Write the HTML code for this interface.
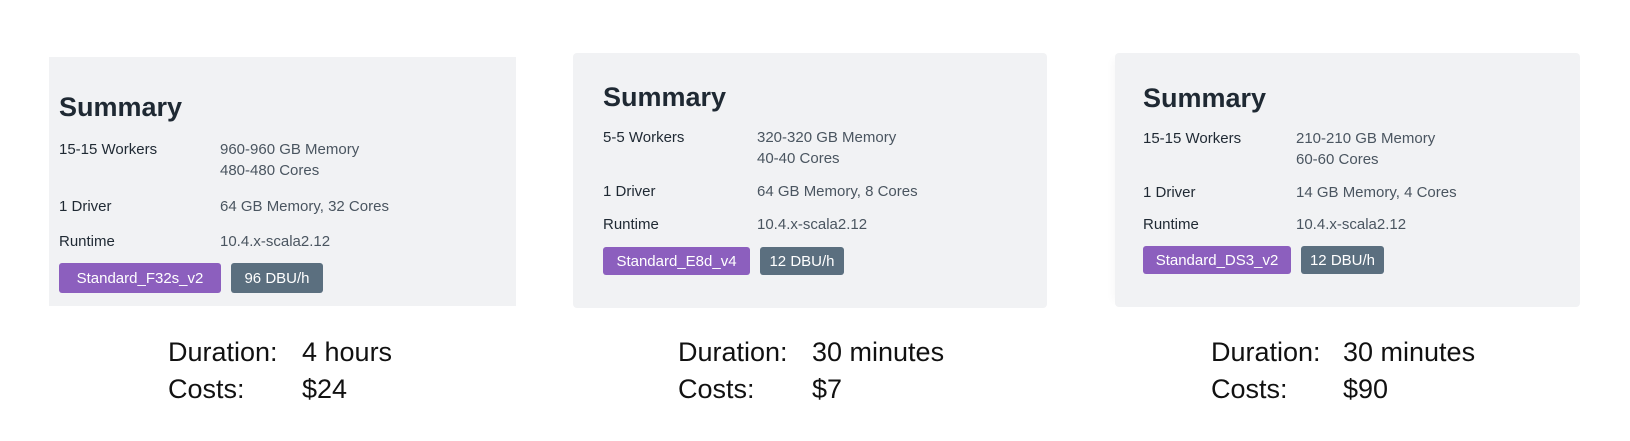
<!DOCTYPE html>
<html><head><meta charset="utf-8"><style>
*{margin:0;padding:0;box-sizing:border-box}
body{width:1630px;height:441px;background:#fff;position:relative;overflow:hidden;font-family:"Liberation Sans",sans-serif}
.p{position:absolute;background:#f1f2f4}
.t{position:absolute;white-space:nowrap}
.h{font-size:27px;font-weight:bold;color:#1f2933;line-height:27px}
.l{font-size:15px;color:#1f2933;line-height:15px}
.v{font-size:15px;color:#4a5560;line-height:15px}
.b{position:absolute;color:#fff;font-size:15px;border-radius:3px;display:flex;align-items:center;justify-content:center}
.pu{background:#8c5fbe}.gr{background:#5b6f7f}
.d{font-size:27px;color:#111;line-height:27px}
</style></head><body>
<div class="p" style="left:49px;top:57px;width:467px;height:249px"></div>
<div class="p" style="left:573px;top:53px;width:474px;height:255px;border-radius:4px"></div>
<div class="p" style="left:1115px;top:53px;width:465px;height:254px;border-radius:4px;box-shadow:-8px 0 8px -6px rgba(0,0,0,0.03)"></div>

<div class="t h" style="left:59px;top:94px">Summary</div>
<div class="t l" style="left:59px;top:142px">15-15 Workers</div>
<div class="t v" style="left:220px;top:142px">960-960 GB Memory</div>
<div class="t v" style="left:220px;top:163px">480-480 Cores</div>
<div class="t l" style="left:59px;top:199px">1 Driver</div>
<div class="t v" style="left:220px;top:199px">64 GB Memory, 32 Cores</div>
<div class="t l" style="left:59px;top:234px">Runtime</div>
<div class="t v" style="left:220px;top:234px">10.4.x-scala2.12</div>
<div class="b pu" style="left:59px;top:263px;width:162px;height:30px">Standard_F32s_v2</div>
<div class="b gr" style="left:231px;top:263px;width:92px;height:30px">96 DBU/h</div>

<div class="t h" style="left:603px;top:84px">Summary</div>
<div class="t l" style="left:603px;top:130px">5-5 Workers</div>
<div class="t v" style="left:757px;top:130px">320-320 GB Memory</div>
<div class="t v" style="left:757px;top:151px">40-40 Cores</div>
<div class="t l" style="left:603px;top:184px">1 Driver</div>
<div class="t v" style="left:757px;top:184px">64 GB Memory, 8 Cores</div>
<div class="t l" style="left:603px;top:217px">Runtime</div>
<div class="t v" style="left:757px;top:217px">10.4.x-scala2.12</div>
<div class="b pu" style="left:603px;top:247px;width:147px;height:28px">Standard_E8d_v4</div>
<div class="b gr" style="left:760px;top:247px;width:84px;height:28px">12 DBU/h</div>

<div class="t h" style="left:1143px;top:85px">Summary</div>
<div class="t l" style="left:1143px;top:131px">15-15 Workers</div>
<div class="t v" style="left:1296px;top:131px">210-210 GB Memory</div>
<div class="t v" style="left:1296px;top:152px">60-60 Cores</div>
<div class="t l" style="left:1143px;top:185px">1 Driver</div>
<div class="t v" style="left:1296px;top:185px">14 GB Memory, 4 Cores</div>
<div class="t l" style="left:1143px;top:217px">Runtime</div>
<div class="t v" style="left:1296px;top:217px">10.4.x-scala2.12</div>
<div class="b pu" style="left:1143px;top:246px;width:148px;height:28px">Standard_DS3_v2</div>
<div class="b gr" style="left:1301px;top:246px;width:83px;height:28px">12 DBU/h</div>

<div class="t d" style="left:168px;top:339px">Duration:</div>
<div class="t d" style="left:302px;top:339px">4 hours</div>
<div class="t d" style="left:168px;top:376px">Costs:</div>
<div class="t d" style="left:302px;top:376px">$24</div>

<div class="t d" style="left:678px;top:339px">Duration:</div>
<div class="t d" style="left:812px;top:339px">30 minutes</div>
<div class="t d" style="left:678px;top:376px">Costs:</div>
<div class="t d" style="left:812px;top:376px">$7</div>

<div class="t d" style="left:1211px;top:339px">Duration:</div>
<div class="t d" style="left:1343px;top:339px">30 minutes</div>
<div class="t d" style="left:1211px;top:376px">Costs:</div>
<div class="t d" style="left:1343px;top:376px">$90</div>
</body></html>
